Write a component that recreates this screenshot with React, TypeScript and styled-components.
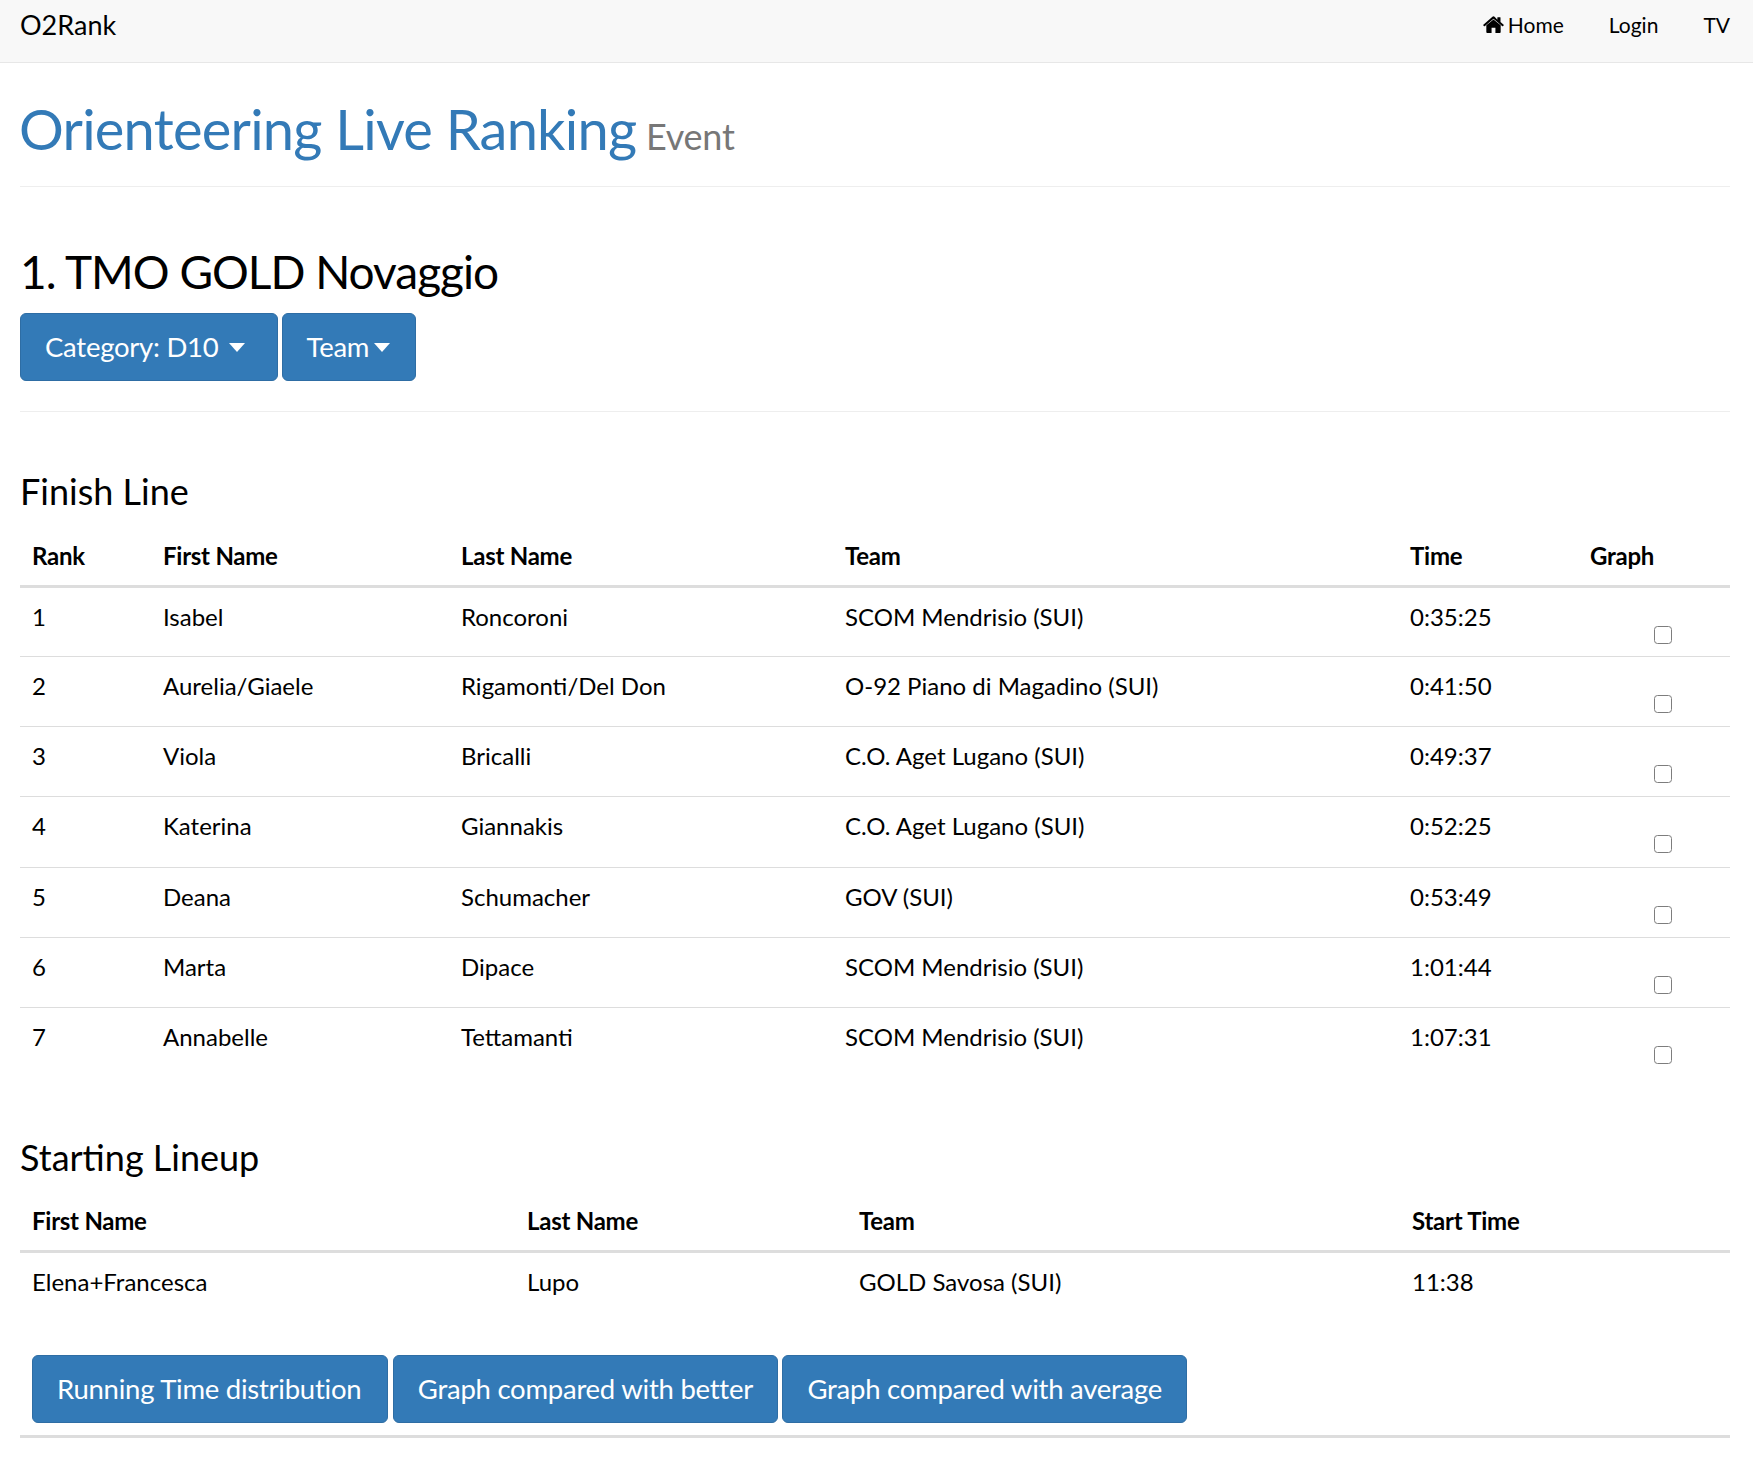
import React from "react";
import styled, { createGlobalStyle } from "styled-components";

const Global = createGlobalStyle`
  * { box-sizing: border-box; }
  html, body { margin: 0; padding: 0; background: #fff; }
  body { font-family: Lato, "Liberation Sans", sans-serif; font-size: 24px; line-height: 1.42857; color: #000; }
`;
const Navbar = styled.nav`
  display: flex; justify-content: space-between; align-items: flex-start;
  height: 63px; background: #f8f8f8; border-bottom: 1px solid #e7e7e7; padding: 0 23px 0 20px;
`;
const Brand = styled.a`font-size: 27px; line-height: 50px; color: #000;`;
const NavList = styled.div`display: flex; gap: 45px; font-size: 21px; line-height: 49px;`;
const NavLink = styled.a`display: flex; align-items: center; gap: 4px; color: #000;`;
const Main = styled.main`padding: 0 23px 0 20px;`;
const PageHeader = styled.header`
  margin-top: 31px; padding-bottom: 15px; border-bottom: 1px solid #eee;
  font-size: 56px; line-height: 70px; color: #337ab7; letter-spacing: -0.76px; text-indent: -1px;
`;
const Small = styled.small`font-size: 36px; color: #777; letter-spacing: -0.2px; margin-left: -4px;`;
const Title = styled.h2`margin: 55px 0 0; font-size: 46px; line-height: 60px; font-weight: 400; letter-spacing: -1px;`;
const BtnRow = styled.div`display: flex; gap: 4px; margin-top: 11px;`;
const Btn = styled.button`
  display: inline-flex; align-items: center; height: 68px;
  padding: 0 ${p => p.$padRight ?? 24}px 0 24px;
  background: #337ab7; border: 1px solid #2e6da4; border-radius: 6px; color: #fff;
  font: inherit; font-size: 27.5px; letter-spacing: -0.25px;
`;
const Caret = styled.span`
  display: inline-block; margin-left: ${p => p.$gap}px;
  border-top: 9px solid #fff; border-left: 8px solid transparent; border-right: 8px solid transparent;
`;
const Divider = styled.hr`margin: 30px 0 0; border: 0; border-top: 1px solid #eee;`;
const Section = styled.h3`margin: 56px 0 0; font-size: 36px; line-height: 46px; font-weight: 400;`;
const Table = styled.table`width: 100%; border-collapse: collapse; table-layout: fixed; margin: 13px 0 1px;`;
const Th = styled.th`
  padding: 0 12px; height: 59px; text-align: left; font-weight: 700; letter-spacing: -0.25px;
  border-bottom: 3px solid #ddd; vertical-align: middle;
`;
const Td = styled.td`padding: 12px 12px 0; height: 70.25px; vertical-align: top; border-top: 1px solid #ddd;`;
const Tr = styled.tr`&:first-child td { border-top: 0; }`;
const GraphCell = styled(Td)`padding-top: 38px;`;
const Check = styled.input`
  appearance: none; display: block; width: 18px; height: 18px; margin: 0 0 0 64px;
  background: #fff; border: 1.6px solid #7d7d7d; border-radius: 3.5px;
`;
const Actions = styled.div`display: flex; gap: 4.5px; padding: 32px 12px 12px;`;
const Rule = styled.hr`margin: 0; border: 0; border-top: 3px solid #ddd;`;

const finish = [
  ["1", "Isabel", "Roncoroni", "SCOM Mendrisio (SUI)", "0:35:25"],
  ["2", "Aurelia/Giaele", "Rigamonti/Del Don", "O-92 Piano di Magadino (SUI)", "0:41:50"],
  ["3", "Viola", "Bricalli", "C.O. Aget Lugano (SUI)", "0:49:37"],
  ["4", "Katerina", "Giannakis", "C.O. Aget Lugano (SUI)", "0:52:25"],
  ["5", "Deana", "Schumacher", "GOV (SUI)", "0:53:49"],
  ["6", "Marta", "Dipace", "SCOM Mendrisio (SUI)", "1:01:44"],
  ["7", "Annabelle", "Tettamanti", "SCOM Mendrisio (SUI)", "1:07:31"],
];
const fw = [131, 298, 384, 565, 180, 152];
const sw = [495, 332, 553, 330];

const Home = () => (
  <svg width="21" height="18" viewBox="0 0 24 20" aria-hidden="true">
    <path fill="#000" d="M12 3.6 3.8 10.4V18a1 1 0 0 0 1 1h5v-5.8h4.4V19h5a1 1 0 0 0 1-1v-7.6L12 3.6Z" />
    <path fill="#000" d="M23.6 9.6 20 6.6V1.5a.5.5 0 0 0-.5-.5h-2.6a.5.5 0 0 0-.5.5v2.4L13.2.6a1.9 1.9 0 0 0-2.4 0L.4 9.6a.5.5 0 0 0-.1.7l.9 1a.5.5 0 0 0 .7.1L12 2.8l10.1 8.6a.5.5 0 0 0 .7-.1l.9-1a.5.5 0 0 0-.1-.7Z" />
  </svg>
);

export default function App() {
  return (
    <>
      <Global />
      <Navbar>
        <Brand>O2Rank</Brand>
        <NavList>
          <NavLink><Home />Home</NavLink>
          <NavLink>Login</NavLink>
          <NavLink>TV</NavLink>
        </NavList>
      </Navbar>
      <Main>
        <PageHeader>Orienteering Live Ranking <Small>Event</Small></PageHeader>
        <Title>1. TMO GOLD Novaggio</Title>
        <BtnRow>
          <Btn $padRight={32}>Category: D10<Caret $gap={10} /></Btn>
          <Btn $padRight={25}>Team<Caret $gap={5} /></Btn>
        </BtnRow>
        <Divider />
        <Section>Finish Line</Section>
        <Table>
          <colgroup>{fw.map((w, i) => <col key={i} width={w} />)}</colgroup>
          <thead>
            <tr>{["Rank", "First Name", "Last Name", "Team", "Time", "Graph"].map(h => <Th key={h}>{h}</Th>)}</tr>
          </thead>
          <tbody>
            {finish.map(r => (
              <Tr key={r[0]}>
                {r.map((c, i) => <Td key={i}>{c}</Td>)}
                <GraphCell><Check type="checkbox" /></GraphCell>
              </Tr>
            ))}
          </tbody>
        </Table>
        <Section>Starting Lineup</Section>
        <Table>
          <colgroup>{sw.map((w, i) => <col key={i} width={w} />)}</colgroup>
          <thead>
            <tr>{["First Name", "Last Name", "Team", "Start Time"].map(h => <Th key={h}>{h}</Th>)}</tr>
          </thead>
          <tbody>
            <Tr>
              {["Elena+Francesca", "Lupo", "GOLD Savosa (SUI)", "11:38"].map(c => <Td key={c}>{c}</Td>)}
            </Tr>
          </tbody>
        </Table>
        <Actions>
          <Btn $padRight={26}>Running Time distribution</Btn>
          <Btn>Graph compared with better</Btn>
          <Btn>Graph compared with average</Btn>
        </Actions>
        <Rule />
      </Main>
    </>
  );
}
